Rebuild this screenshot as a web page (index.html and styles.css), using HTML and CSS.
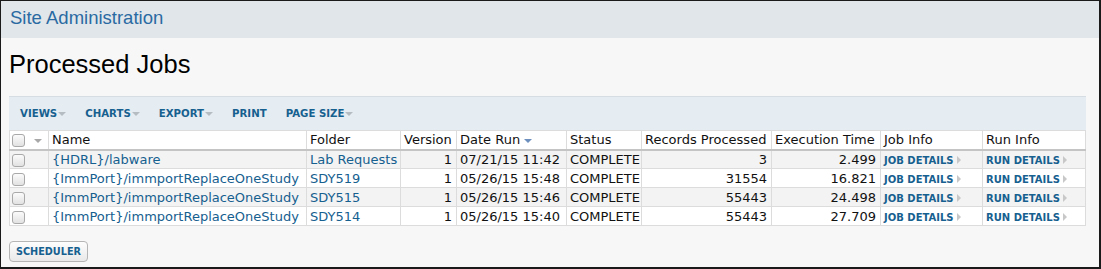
FILE: index.html
```html
<!DOCTYPE html>
<html lang="en">
<head>
    <meta charset="UTF-8">
    <title>Processed Jobs</title>
    <link rel="stylesheet" href="styles.css">
</head>
<body>
    <div class="frame">
        <!-- Header -->
        <div class="site-header">Site Administration</div>

        <div class="content">
            <h1 class="page-title">Processed Jobs</h1>

            <!-- Grid Toolbar -->
            <div class="toolbar">
                <span class="tool-btn">Views<span class="caret"></span></span>
                <span class="tool-btn">Charts<span class="caret"></span></span>
                <span class="tool-btn">Export<span class="caret"></span></span>
                <span class="tool-btn">Print</span>
                <span class="tool-btn">Page Size<span class="caret"></span></span>
            </div>

            <table class="grid">
                <colgroup>
                    <col class="c-check">
                    <col class="c-name">
                    <col class="c-folder">
                    <col class="c-version">
                    <col class="c-date">
                    <col class="c-status">
                    <col class="c-records">
                    <col class="c-time">
                    <col class="c-job">
                    <col>
                </colgroup>
                <thead>
                    <tr>
                        <th class="check-cell"><span class="checkbox"></span><span class="head-caret"></span></th>
                        <th>Name</th>
                        <th>Folder</th>
                        <th>Version</th>
                        <th>Date Run <span class="sort-caret"></span></th>
                        <th>Status</th>
                        <th>Records Processed</th>
                        <th>Execution Time</th>
                        <th>Job Info</th>
                        <th>Run Info</th>
                    </tr>
                </thead>
                <tbody id="jobRows">
                    <!-- Rows are added by the script below -->
                </tbody>
            </table>

            <button class="scheduler-btn">Scheduler</button>
        </div>
    </div>

    <script>
        // Job rows
        const jobs = [
            { name: '{HDRL}/labware', folder: 'Lab Requests', version: 1, date: '07/21/15 11:42', status: 'COMPLETE', records: 3, time: '2.499' },
            { name: '{ImmPort}/immportReplaceOneStudy', folder: 'SDY519', version: 1, date: '05/26/15 15:48', status: 'COMPLETE', records: 31554, time: '16.821' },
            { name: '{ImmPort}/immportReplaceOneStudy', folder: 'SDY515', version: 1, date: '05/26/15 15:46', status: 'COMPLETE', records: 55443, time: '24.498' },
            { name: '{ImmPort}/immportReplaceOneStudy', folder: 'SDY514', version: 1, date: '05/26/15 15:40', status: 'COMPLETE', records: 55443, time: '27.709' }
        ];

        const rows = document.getElementById('jobRows');
        jobs.forEach((job, i) => {
            const tr = document.createElement('tr');
            if (i % 2 === 0) tr.className = 'alt';
            tr.innerHTML = `
                <td class="check-cell"><span class="checkbox"></span></td>
                <td><a href="#">${job.name}</a></td>
                <td><a href="#">${job.folder}</a></td>
                <td class="num">${job.version}</td>
                <td>${job.date}</td>
                <td>${job.status}</td>
                <td class="num">${job.records}</td>
                <td class="num">${job.time}</td>
                <td><a href="#" class="small-link">Job Details<span class="arrow"></span></a></td>
                <td><a href="#" class="small-link">Run Details<span class="arrow"></span></a></td>
            `;
            rows.appendChild(tr);
        });
    </script>
</body>
</html>
```

FILE: styles.css
```css
/* Reset and Basic Styles */
* {
    box-sizing: border-box;
    margin: 0;
    padding: 0;
}

body {
    background-color: #ffffff;
    font-family: 'Liberation Sans', Arial, sans-serif;
}

.frame {
    width: 1101px;
    height: 269px;
    border-top: 1px solid #1a1a1a;
    border-left: 1px solid #1a1a1a;
    border-right: 2px solid #1a1a1a;
    border-bottom: 2px solid #1a1a1a;
    background-color: #f7f7f7;
    overflow: hidden;
}

/* Header */
.site-header {
    height: 37px;
    line-height: 33px;
    padding-left: 9px;
    background-color: #e1e6ea;
    color: #2a6aa2;
    font-size: 18.5px;
}

.content {
    padding: 0 13px 0 8px;
}

.page-title {
    margin: 11px 0 17px 0;
    font-size: 25.5px;
    font-weight: normal;
    line-height: 30px;
    color: #000;
}

/* Toolbar */
.toolbar {
    display: flex;
    align-items: center;
    height: 34px;
    padding-left: 11px;
    gap: 19px;
    background-color: #e5ecf2;
    border-top: 1px solid #d6dde3;
}

.tool-btn {
    display: flex;
    align-items: center;
    font-family: 'DejaVu Sans', Verdana, sans-serif;
    font-size: 10.2px;
    font-weight: bold;
    text-transform: uppercase;
    color: #16608f;
}

.caret {
    width: 0;
    height: 0;
    margin-left: 1px;
    border-left: 4px solid transparent;
    border-right: 4px solid transparent;
    border-top: 4px solid #b5bcc2;
}

/* Grid */
.grid {
    width: 1077px;
    border-collapse: collapse;
    table-layout: fixed;
    font-family: 'DejaVu Sans', Verdana, sans-serif;
    font-size: 13px;
    color: #111;
    background-color: #fff;
    border: 1px solid #dcdcdc;
}

.c-check { width: 39px; }
.c-name { width: 258px; }
.c-folder { width: 94px; }
.c-version { width: 56px; }
.c-date { width: 110px; }
.c-status { width: 75px; }
.c-records { width: 130px; }
.c-time { width: 109px; }
.c-job { width: 102px; }

.grid th, .grid td {
    height: 19px;
    padding: 0 2px 0 3px;
    text-align: left;
    font-weight: normal;
    white-space: nowrap;
    overflow: hidden;
    border-left: 1px solid #dcdcdc;
    border-top: 1px solid #dcdcdc;
}

.grid thead th {
    border-bottom: 2px solid #c4c4c4;
    border-top: none;
}

.grid tr.alt td {
    background-color: #f3f3f3;
}

.grid td.num {
    text-align: right;
    padding-right: 4px;
}

.grid a {
    color: #16608f;
    text-decoration: none;
}

.check-cell {
    padding-left: 2px !important;
}

.checkbox {
    display: inline-block;
    vertical-align: middle;
    width: 13px;
    height: 13px;
    border: 1px solid #a9a9a9;
    border-radius: 3px;
    background: linear-gradient(#fbfbfb, #e2e2e2);
}

.head-caret {
    display: inline-block;
    vertical-align: middle;
    margin-left: 9px;
    width: 0;
    height: 0;
    border-left: 4px solid transparent;
    border-right: 4px solid transparent;
    border-top: 4px solid #a8a8a8;
}

.sort-caret {
    display: inline-block;
    vertical-align: middle;
    width: 0;
    height: 0;
    border-left: 4px solid transparent;
    border-right: 4px solid transparent;
    border-top: 4px solid #6d8fbd;
}

.small-link {
    display: inline-flex;
    align-items: center;
    font-size: 10px;
    font-weight: bold;
    text-transform: uppercase;
}

.arrow {
    width: 0;
    height: 0;
    margin-left: 3px;
    border-top: 4px solid transparent;
    border-bottom: 4px solid transparent;
    border-left: 4px solid #c8c8c8;
}

/* Scheduler Button */
.scheduler-btn {
    margin-top: 15px;
    height: 21px;
    width: 79px;
    font-family: 'DejaVu Sans', Verdana, sans-serif;
    font-size: 9.7px;
    font-weight: bold;
    text-transform: uppercase;
    color: #16608f;
    background: linear-gradient(#fdfdfd, #e9e9e9);
    border: 1px solid #b5b5b5;
    border-radius: 4px;
}
```
